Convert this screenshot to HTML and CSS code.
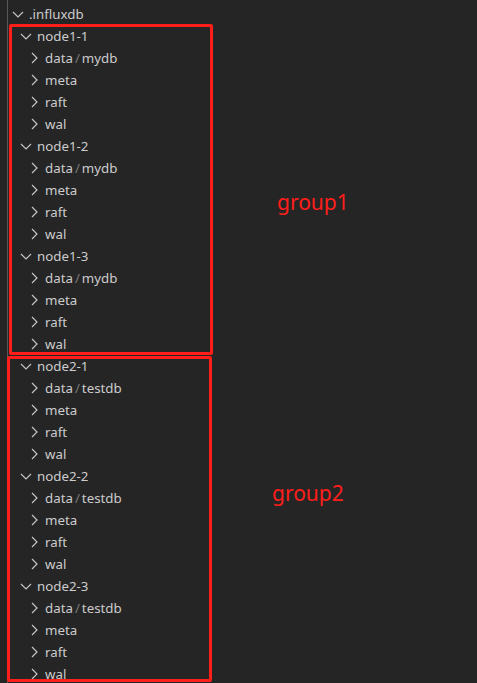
FILE: index.html
```html
<!DOCTYPE html>
<html>
<head>
<meta charset="utf-8">
<link rel="stylesheet" href="styles.css">
</head>
<body>
<div class="explorer">
  <div class="row lvl0"><span class="tw"><svg viewBox="0 0 16 16"><polyline points="3,6 8,11 13,6"/></svg></span><span class="name">.influxdb</span></div>

  <div class="group g1">
    <div class="row lvl1"><span class="tw"><svg viewBox="0 0 16 16"><polyline points="3,6 8,11 13,6"/></svg></span><span class="name">node1-1</span></div>
    <div class="row lvl2"><span class="tw"><svg viewBox="0 0 16 16"><polyline points="6,3 11,8 6,13"/></svg></span><span class="name">data<span class="sep">/</span>mydb</span></div>
    <div class="row lvl2"><span class="tw"><svg viewBox="0 0 16 16"><polyline points="6,3 11,8 6,13"/></svg></span><span class="name">meta</span></div>
    <div class="row lvl2"><span class="tw"><svg viewBox="0 0 16 16"><polyline points="6,3 11,8 6,13"/></svg></span><span class="name">raft</span></div>
    <div class="row lvl2"><span class="tw"><svg viewBox="0 0 16 16"><polyline points="6,3 11,8 6,13"/></svg></span><span class="name">wal</span></div>
    <div class="row lvl1"><span class="tw"><svg viewBox="0 0 16 16"><polyline points="3,6 8,11 13,6"/></svg></span><span class="name">node1-2</span></div>
    <div class="row lvl2"><span class="tw"><svg viewBox="0 0 16 16"><polyline points="6,3 11,8 6,13"/></svg></span><span class="name">data<span class="sep">/</span>mydb</span></div>
    <div class="row lvl2"><span class="tw"><svg viewBox="0 0 16 16"><polyline points="6,3 11,8 6,13"/></svg></span><span class="name">meta</span></div>
    <div class="row lvl2"><span class="tw"><svg viewBox="0 0 16 16"><polyline points="6,3 11,8 6,13"/></svg></span><span class="name">raft</span></div>
    <div class="row lvl2"><span class="tw"><svg viewBox="0 0 16 16"><polyline points="6,3 11,8 6,13"/></svg></span><span class="name">wal</span></div>
    <div class="row lvl1"><span class="tw"><svg viewBox="0 0 16 16"><polyline points="3,6 8,11 13,6"/></svg></span><span class="name">node1-3</span></div>
    <div class="row lvl2"><span class="tw"><svg viewBox="0 0 16 16"><polyline points="6,3 11,8 6,13"/></svg></span><span class="name">data<span class="sep">/</span>mydb</span></div>
    <div class="row lvl2"><span class="tw"><svg viewBox="0 0 16 16"><polyline points="6,3 11,8 6,13"/></svg></span><span class="name">meta</span></div>
    <div class="row lvl2"><span class="tw"><svg viewBox="0 0 16 16"><polyline points="6,3 11,8 6,13"/></svg></span><span class="name">raft</span></div>
    <div class="row lvl2"><span class="tw"><svg viewBox="0 0 16 16"><polyline points="6,3 11,8 6,13"/></svg></span><span class="name">wal</span></div>
    <span class="note">group1</span>
  </div>

  <div class="group g2">
    <div class="row lvl1"><span class="tw"><svg viewBox="0 0 16 16"><polyline points="3,6 8,11 13,6"/></svg></span><span class="name">node2-1</span></div>
    <div class="row lvl2"><span class="tw"><svg viewBox="0 0 16 16"><polyline points="6,3 11,8 6,13"/></svg></span><span class="name">data<span class="sep">/</span>testdb</span></div>
    <div class="row lvl2"><span class="tw"><svg viewBox="0 0 16 16"><polyline points="6,3 11,8 6,13"/></svg></span><span class="name">meta</span></div>
    <div class="row lvl2"><span class="tw"><svg viewBox="0 0 16 16"><polyline points="6,3 11,8 6,13"/></svg></span><span class="name">raft</span></div>
    <div class="row lvl2"><span class="tw"><svg viewBox="0 0 16 16"><polyline points="6,3 11,8 6,13"/></svg></span><span class="name">wal</span></div>
    <div class="row lvl1"><span class="tw"><svg viewBox="0 0 16 16"><polyline points="3,6 8,11 13,6"/></svg></span><span class="name">node2-2</span></div>
    <div class="row lvl2"><span class="tw"><svg viewBox="0 0 16 16"><polyline points="6,3 11,8 6,13"/></svg></span><span class="name">data<span class="sep">/</span>testdb</span></div>
    <div class="row lvl2"><span class="tw"><svg viewBox="0 0 16 16"><polyline points="6,3 11,8 6,13"/></svg></span><span class="name">meta</span></div>
    <div class="row lvl2"><span class="tw"><svg viewBox="0 0 16 16"><polyline points="6,3 11,8 6,13"/></svg></span><span class="name">raft</span></div>
    <div class="row lvl2"><span class="tw"><svg viewBox="0 0 16 16"><polyline points="6,3 11,8 6,13"/></svg></span><span class="name">wal</span></div>
    <div class="row lvl1"><span class="tw"><svg viewBox="0 0 16 16"><polyline points="3,6 8,11 13,6"/></svg></span><span class="name">node2-3</span></div>
    <div class="row lvl2"><span class="tw"><svg viewBox="0 0 16 16"><polyline points="6,3 11,8 6,13"/></svg></span><span class="name">data<span class="sep">/</span>testdb</span></div>
    <div class="row lvl2"><span class="tw"><svg viewBox="0 0 16 16"><polyline points="6,3 11,8 6,13"/></svg></span><span class="name">meta</span></div>
    <div class="row lvl2"><span class="tw"><svg viewBox="0 0 16 16"><polyline points="6,3 11,8 6,13"/></svg></span><span class="name">raft</span></div>
    <div class="row lvl2"><span class="tw"><svg viewBox="0 0 16 16"><polyline points="6,3 11,8 6,13"/></svg></span><span class="name">wal</span></div>
    <span class="note">group2</span>
  </div>
</div>
</body>
</html>
```

FILE: styles.css
```css
html, body {
  margin: 0;
  padding: 0;
  background: #252526;
  height: 100%;
  overflow: hidden;
}

.explorer {
  position: relative;
  min-height: 100%;
  padding-top: 3px;
  box-sizing: border-box;
  font-family: "Noto Sans", "Open Sans", sans-serif;
  font-size: 13.3px;
  color: #cccccc;
}

.explorer::before {
  content: "";
  position: absolute;
  left: 7px;
  top: 0;
  bottom: 0;
  width: 1px;
  background: #585858;
}

.row {
  height: 22px;
  display: flex;
  align-items: center;
  white-space: nowrap;
}

.lvl0 { padding-left: 10px; }
.lvl1 { padding-left: 18px; }
.lvl2 { padding-left: 26px; }

.tw {
  width: 16px;
  height: 16px;
  flex: none;
  display: flex;
}

.tw svg {
  width: 16px;
  height: 16px;
  fill: none;
  stroke: #c5c5c5;
  stroke-width: 1.2;
}

.name {
  margin-left: 3px;
  line-height: 22px;
}

.sep {
  color: #7a7a7a;
  margin: 0 2px;
}

.group {
  position: relative;
}

.group::after {
  content: "";
  position: absolute;
  border: 3px solid #ff1e1a;
  border-radius: 2px;
}

.g1::after {
  left: 9px;
  top: -1px;
  width: 198px;
  height: 325px;
}

.g2::after {
  left: 7px;
  top: 1px;
  width: 199px;
  height: 320px;
}

.note {
  position: absolute;
  color: #ff1e1a;
  font-family: "Noto Sans", "Open Sans", sans-serif;
  font-size: 21px;
  line-height: 1;
}

.g1 .note {
  left: 277px;
  top: 167px;
}

.g2 .note {
  left: 272px;
  top: 128px;
}
```
